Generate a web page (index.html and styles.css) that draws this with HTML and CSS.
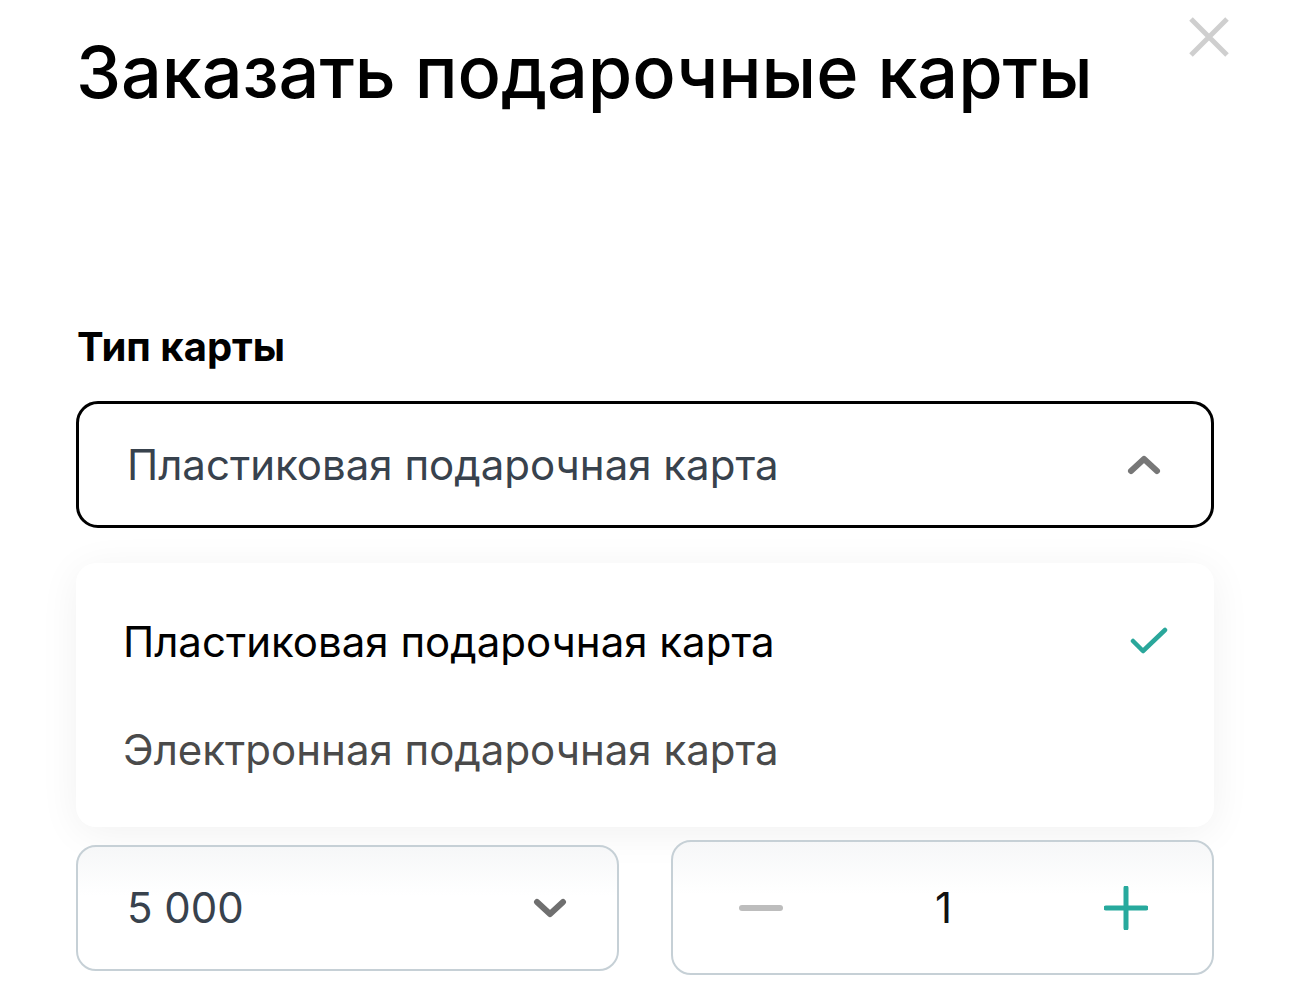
FILE: index.html
```html
<!DOCTYPE html>
<html lang="ru">

<head>
    <meta charset="UTF-8">
    <meta name="viewport" content="width=device-width, initial-scale=1.0">
    <title>Заказать подарочные карты</title>
    <link rel="stylesheet" href="styles.css">
</head>

<body>
    <main class="modal">
        <button class="close" aria-label="Закрыть">
            <svg width="42" height="42" viewBox="0 0 42 42">
                <path d="M3 3 L39 39 M39 3 L3 39" stroke="#cfcfcf" stroke-width="5" fill="none" />
            </svg>
        </button>

        <h1 class="title">Заказать подарочные карты</h1>

        <div class="field">
            <div class="field-label">Тип карты</div>
            <div class="select select-open">
                <span class="select-value">Пластиковая подарочная карта</span>
                <svg class="chevron" width="34" height="20" viewBox="0 0 34 20">
                    <path d="M4 16 L17 4 L30 16" stroke="#777" stroke-width="6" stroke-linecap="round" stroke-linejoin="round" fill="none" />
                </svg>
            </div>

            <ul class="options">
                <li class="option option-active">
                    <span>Пластиковая подарочная карта</span>
                    <svg width="38" height="28" viewBox="0 0 38 28">
                        <path d="M3 14 L13 24 L35 3" stroke="#2aa79b" stroke-width="4.5" stroke-linecap="round" stroke-linejoin="round" fill="none" />
                    </svg>
                </li>
                <li class="option">
                    <span>Электронная подарочная карта</span>
                </li>
            </ul>
        </div>

        <div class="row">
            <div class="select select-small">
                <span class="select-value">5 000</span>
                <svg class="chevron" width="34" height="22" viewBox="0 0 34 22">
                    <path d="M4 5 L17 17 L30 5" stroke="#6f6f6f" stroke-width="6" stroke-linecap="round" stroke-linejoin="round" fill="none" />
                </svg>
            </div>

            <div class="stepper">
                <button class="step-btn" aria-label="Меньше">
                    <svg width="44" height="8" viewBox="0 0 44 8">
                        <path d="M3 4 L41 4" stroke="#bdbdbd" stroke-width="6" stroke-linecap="round" />
                    </svg>
                </button>
                <span class="step-value">1</span>
                <button class="step-btn" aria-label="Больше">
                    <svg width="44" height="44" viewBox="0 0 44 44">
                        <path d="M2 22 L42 22 M22 2 L22 42" stroke="#27a99d" stroke-width="5" stroke-linecap="round" />
                    </svg>
                </button>
            </div>
        </div>
    </main>
</body>

</html>
```

FILE: styles.css
```css
* {
    padding: 0;
    margin: 0;
    box-sizing: border-box;
}

body {
    background-color: #fff;
    font-family: Inter, "Noto Sans", sans-serif;
    color: #000;
}

.modal {
    position: relative;
    padding: 0 76px;
}

.close {
    position: absolute;
    top: 16px;
    right: 60px;
    border: none;
    background: none;
    width: 42px;
    height: 42px;
}

.title {
    font-size: 72px;
    font-weight: 500;
    letter-spacing: -0.1px;
    line-height: 1;
    padding-top: 36px;
    padding-left: 0;
}

.field {
    margin-top: 219px;
}

.field-label {
    font-size: 40px;
    font-weight: 700;
    line-height: 1;
    padding-left: 1px;
}

.select {
    display: flex;
    align-items: center;
    justify-content: space-between;
    border: 2px solid #c6d0d6;
    border-radius: 20px;
    background: #fff;
    color: #38424d;
    font-size: 42px;
    padding: 0 50px;
}

.select-open {
    margin-top: 34px;
    height: 127px;
    border: 3px solid #000;
    border-radius: 22px;
    padding: 0 50px 0 48px;
}

.options {
    list-style: none;
    margin-top: 35px;
    padding: 24px 0;
    background: #fff;
    border-radius: 20px;
    box-shadow: 0 6px 40px rgba(0, 0, 0, 0.06);
}

.option {
    display: flex;
    align-items: center;
    justify-content: space-between;
    height: 108px;
    padding: 0 46px 0 47px;
    font-size: 42px;
    color: #4a4a4a;
}

.option-active {
    color: #000;
}

.row {
    display: grid;
    grid-template-columns: 1fr 1fr;
    gap: 52px;
    align-items: center;
    margin-top: 13px;
}

.select-small {
    height: 126px;
    padding: 0 50px 0 49px;
    background: linear-gradient(#f6f7f8, #fff 40%);
}

.stepper {
    display: flex;
    align-items: center;
    justify-content: space-between;
    height: 135px;
    border: 2px solid #c6d0d6;
    border-radius: 20px;
    padding: 0 64px 0 66px;
    background: linear-gradient(#f6f7f8, #fff 40%);
}

.step-btn {
    border: none;
    background: none;
    display: flex;
}

.step-value {
    font-size: 42px;
    color: #111;
}
```
